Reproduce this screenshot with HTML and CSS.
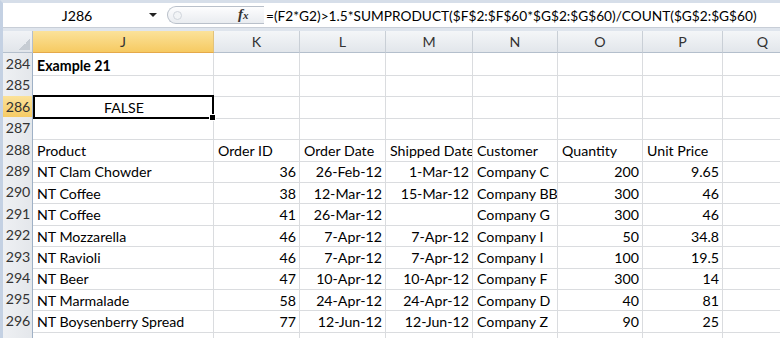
FILE: index.html
```html
<!DOCTYPE html>
<html lang="en">
    <head>
        <meta charset="UTF-8">
        <title>Example 21 - Sheet</title>
        <link rel="stylesheet" href="styles.css">
    </head>
    <body>
        <div class="window">
            <div class="formula-bar">
                <div class="name-box">
                    <span class="name-text">J286</span>
                    <span class="arrow"></span>
                </div>
                <div class="splitter"><span class="dot"></span></div>
                <div class="fx"><i>f</i><i class="sub">x</i></div>
                <div class="formula">=(F2*G2)&gt;1.5*SUMPRODUCT($F$2:$F$60*$G$2:$G$60)/COUNT($G$2:$G$60)</div>
            </div>
            <div class="gap"></div>
            <div class="sheet">
                <div class="row hdr-row">
                    <div class="corner"><span class="tri"></span></div>
                    <div class="hdr active">J</div>
                    <div class="hdr">K</div>
                    <div class="hdr">L</div>
                    <div class="hdr">M</div>
                    <div class="hdr">N</div>
                    <div class="hdr">O</div>
                    <div class="hdr">P</div>
                    <div class="hdr">Q</div>
                </div>
                <div class="row">
                    <div class="rh">284</div>
                    <div class="c b">Example 21</div>
                    <div class="c"></div><div class="c"></div><div class="c"></div><div class="c"></div><div class="c"></div><div class="c"></div><div class="c"></div>
                </div>
                <div class="row">
                    <div class="rh">285</div>
                    <div class="c"></div><div class="c"></div><div class="c"></div><div class="c"></div><div class="c"></div><div class="c"></div><div class="c"></div><div class="c"></div>
                </div>
                <div class="row">
                    <div class="rh active">286</div>
                    <div class="c ctr selected">FALSE<span class="handle"></span></div>
                    <div class="c"></div><div class="c"></div><div class="c"></div><div class="c"></div><div class="c"></div><div class="c"></div><div class="c"></div>
                </div>
                <div class="row">
                    <div class="rh">287</div>
                    <div class="c"></div><div class="c"></div><div class="c"></div><div class="c"></div><div class="c"></div><div class="c"></div><div class="c"></div><div class="c"></div>
                </div>
                <div class="row">
                    <div class="rh">288</div>
                    <div class="c">Product</div>
                    <div class="c">Order ID</div>
                    <div class="c">Order Date</div>
                    <div class="c">Shipped Date</div>
                    <div class="c">Customer</div>
                    <div class="c">Quantity</div>
                    <div class="c">Unit Price</div>
                    <div class="c"></div>
                </div>
                <div class="row">
                    <div class="rh">289</div>
                    <div class="c">NT Clam Chowder</div>
                    <div class="c n">36</div>
                    <div class="c n">26-Feb-12</div>
                    <div class="c n">1-Mar-12</div>
                    <div class="c">Company C</div>
                    <div class="c n">200</div>
                    <div class="c n">9.65</div>
                    <div class="c"></div>
                </div>
                <div class="row">
                    <div class="rh">290</div>
                    <div class="c">NT Coffee</div>
                    <div class="c n">38</div>
                    <div class="c n">12-Mar-12</div>
                    <div class="c n">15-Mar-12</div>
                    <div class="c">Company BB</div>
                    <div class="c n">300</div>
                    <div class="c n">46</div>
                    <div class="c"></div>
                </div>
                <div class="row">
                    <div class="rh">291</div>
                    <div class="c">NT Coffee</div>
                    <div class="c n">41</div>
                    <div class="c n">26-Mar-12</div>
                    <div class="c n"></div>
                    <div class="c">Company G</div>
                    <div class="c n">300</div>
                    <div class="c n">46</div>
                    <div class="c"></div>
                </div>
                <div class="row">
                    <div class="rh">292</div>
                    <div class="c">NT Mozzarella</div>
                    <div class="c n">46</div>
                    <div class="c n">7-Apr-12</div>
                    <div class="c n">7-Apr-12</div>
                    <div class="c">Company I</div>
                    <div class="c n">50</div>
                    <div class="c n">34.8</div>
                    <div class="c"></div>
                </div>
                <div class="row">
                    <div class="rh">293</div>
                    <div class="c">NT Ravioli</div>
                    <div class="c n">46</div>
                    <div class="c n">7-Apr-12</div>
                    <div class="c n">7-Apr-12</div>
                    <div class="c">Company I</div>
                    <div class="c n">100</div>
                    <div class="c n">19.5</div>
                    <div class="c"></div>
                </div>
                <div class="row">
                    <div class="rh">294</div>
                    <div class="c">NT Beer</div>
                    <div class="c n">47</div>
                    <div class="c n">10-Apr-12</div>
                    <div class="c n">10-Apr-12</div>
                    <div class="c">Company F</div>
                    <div class="c n">300</div>
                    <div class="c n">14</div>
                    <div class="c"></div>
                </div>
                <div class="row">
                    <div class="rh">295</div>
                    <div class="c">NT Marmalade</div>
                    <div class="c n">58</div>
                    <div class="c n">24-Apr-12</div>
                    <div class="c n">24-Apr-12</div>
                    <div class="c">Company D</div>
                    <div class="c n">40</div>
                    <div class="c n">81</div>
                    <div class="c"></div>
                </div>
                <div class="row">
                    <div class="rh">296</div>
                    <div class="c">NT Boysenberry Spread</div>
                    <div class="c n">77</div>
                    <div class="c n">12-Jun-12</div>
                    <div class="c n">12-Jun-12</div>
                    <div class="c">Company Z</div>
                    <div class="c n">90</div>
                    <div class="c n">25</div>
                    <div class="c"></div>
                </div>
                <div class="row">
                    <div class="rh"></div>
                    <div class="c"></div><div class="c"></div><div class="c"></div><div class="c"></div><div class="c"></div><div class="c"></div><div class="c"></div><div class="c"></div>
                </div>
            </div>
        </div>
    </body>
</html>
```

FILE: styles.css
```css
body {
    margin: 0px;
    padding: 0px;
    background-color: #fff;
    font-family: Lato, "Liberation Sans", sans-serif;
    font-size: 14.2px;
    color: #000;
    overflow: hidden;
}
.window {
    width: 780px;
    height: 338px;
    box-sizing: border-box;
    border-left: 3px solid #c4d1e3;
    border-top: 3px solid #d6dee9;
    overflow: hidden;
}

/* formula bar */
.formula-bar {
    display: flex;
    align-items: center;
    height: 24px;
    background-color: #fff;
    border-bottom: 1px solid #c8ced7;
    white-space: nowrap;
}
.name-box {
    display: flex;
    align-items: center;
    width: 162px;
    height: 100%;
}
.name-text {
    flex: 1;
    text-align: center;
    padding-left: 2px;
}
.arrow {
    width: 0px;
    height: 0px;
    border-left: 4px solid transparent;
    border-right: 4px solid transparent;
    border-top: 4px solid #222;
    margin-right: 8px;
}
.splitter {
    display: flex;
    align-items: center;
    width: 60px;
    height: 18px;
    margin-left: 2px;
    box-sizing: border-box;
    border: 1px solid #b9c0ca;
    border-right: none;
    border-radius: 9px 0px 0px 9px;
    background: linear-gradient(#fdfdfe, #e9ecf0);
}
.dot {
    width: 7px;
    height: 7px;
    margin-left: 5px;
    border-radius: 50%;
    border: 1px solid #d0d5dc;
    background-color: #f2f4f6;
}
.fx {
    width: 37px;
    height: 18px;
    box-sizing: border-box;
    border-top: 1px solid #b9c0ca;
    border-bottom: 1px solid #b9c0ca;
    background: linear-gradient(#fdfdfe, #e9ecf0);
    font-family: "Liberation Serif", serif;
    font-size: 15px;
    font-weight: bold;
    color: #333;
    padding-left: 11px;
    line-height: 15px;
}
.fx .sub {
    font-size: 11px;
}
.formula {
    padding-left: 2px;
    font-size: 13.7px;
    overflow: hidden;
}
.gap {
    height: 3px;
    background-color: #dfe5ed;
}

/* grid */
.sheet {
    overflow: hidden;
}
.row {
    display: grid;
    grid-template-columns: 30px 181px 86px 86px 87px 85px 85px 80px 80px;
    height: 21.4px;
}
.hdr-row {
    height: 22px;
}
.corner {
    display: flex;
    justify-content: flex-end;
    align-items: flex-end;
    padding: 2px;
    box-sizing: border-box;
    background: linear-gradient(#f1f3f6, #e1e5ea);
    border-right: 1px solid #b4bfcc;
    border-bottom: 1px solid #b4bfcc;
}
.tri {
    width: 11px;
    height: 11px;
    background: linear-gradient(135deg, transparent 50%, #c6ccd3 50%);
}
.hdr {
    box-sizing: border-box;
    background: linear-gradient(#f4f6f8, #e2e6eb);
    border-right: 1px solid #c9cfd6;
    border-bottom: 1px solid #b4bfcc;
    color: #333;
    text-align: center;
    line-height: 21px;
}
.hdr.active {
    background: linear-gradient(#fbe29a, #f6ca62);
    border-bottom-color: #e5a94a;
    border-right-color: #e2c27a;
}
.rh {
    box-sizing: border-box;
    background: linear-gradient(90deg, #eef0f3, #e4e7eb);
    border-right: 1px solid #9fb1c6;
    border-bottom: 1px solid #cdd2d9;
    color: #333;
    text-align: center;
    line-height: 22px;
    padding-left: 1px;
}
.rh.active {
    background: linear-gradient(#fbe29a, #f6ca62);
    border-bottom-color: #e2b85e;
}
.c {
    display: flex;
    align-items: center;
    box-sizing: border-box;
    border-right: 1px solid #dadcdf;
    border-bottom: 1px solid #dadcdf;
    padding: 2px 3px 0px 4px;
    white-space: nowrap;
    overflow: hidden;
}
.c.n {
    justify-content: flex-end;
}
.c.b {
    font-weight: bold;
}
.c.ctr {
    justify-content: center;
}
.c.selected {
    position: relative;
    overflow: visible;
    border: 2px solid #000;
    margin-top: -1px;
    height: calc(100% + 1px);
}
.handle {
    position: absolute;
    right: -4px;
    bottom: -4px;
    width: 5px;
    height: 5px;
    background-color: #000;
    border: 1px solid #fff;
}
```
